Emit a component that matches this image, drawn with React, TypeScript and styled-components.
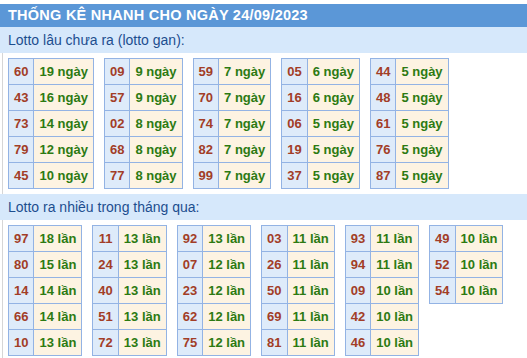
import React from 'react'
import styled, { createGlobalStyle } from 'styled-components'

const Global = createGlobalStyle`
  body {
    margin: 0;
    background: #ffffff;
    font-family: "Liberation Sans", Arial, sans-serif;
  }
`

const Wrap = styled.div`
  padding-top: 4px;
  width: 527px;
`

const Title = styled.div`
  height: 23px;
  line-height: 23px;
  background: #5b97d7;
  color: #ffffff;
  font-size: 14.5px;
  letter-spacing: 0.25px;
  font-weight: bold;
  padding-left: 8px;
`

const SubTitle = styled.div`
  height: 26px;
  line-height: 26px;
  background: #d6e8fb;
  color: #1d4e8f;
  font-size: 14px;
  padding-left: 8px;
`

const Body = styled.div`
  margin-left: 2px;
  border-left: 1px solid #d6d6d6;
  padding: 5px 0 5px 5px;
  display: flex;
  align-items: flex-start;
  gap: 10px;
`

const Table = styled.table`
  border-collapse: collapse;
  font-size: 13px;
  font-weight: bold;
`

const NumCell = styled.td`
  border: 1px solid #93b3e4;
  background: #deebfa;
  color: #a23d27;
  line-height: 25px;
  padding: 0 5px;
  text-align: center;
`

const CountCell = styled.td`
  border: 1px solid #93b3e4;
  background: #fdf3e2;
  color: #2c7a12;
  line-height: 25px;
  padding: 0 5px;
`

type Row = [string, string]

const gan: Row[][] = [
  [['60', '19'], ['43', '16'], ['73', '14'], ['79', '12'], ['45', '10']],
  [['09', '9'], ['57', '9'], ['02', '8'], ['68', '8'], ['77', '8']],
  [['59', '7'], ['70', '7'], ['74', '7'], ['82', '7'], ['99', '7']],
  [['05', '6'], ['16', '6'], ['06', '5'], ['19', '5'], ['37', '5']],
  [['44', '5'], ['48', '5'], ['61', '5'], ['76', '5'], ['87', '5']],
]

const nhieu: Row[][] = [
  [['97', '18'], ['80', '15'], ['14', '14'], ['66', '14'], ['10', '13']],
  [['11', '13'], ['24', '13'], ['40', '13'], ['51', '13'], ['72', '13']],
  [['92', '13'], ['07', '12'], ['23', '12'], ['62', '12'], ['75', '12']],
  [['03', '11'], ['26', '11'], ['50', '11'], ['69', '11'], ['81', '11']],
  [['93', '11'], ['94', '11'], ['09', '10'], ['42', '10'], ['46', '10']],
  [['49', '10'], ['52', '10'], ['54', '10']],
]

function Block({ rows, unit }: { rows: Row[][]; unit: string }) {
  return (
    <Body>
      {rows.map((t, i) => (
        <Table key={i}>
          <tbody>
            {t.map(([n, c]) => (
              <tr key={n}>
                <NumCell>{n}</NumCell>
                <CountCell>{c} {unit}</CountCell>
              </tr>
            ))}
          </tbody>
        </Table>
      ))}
    </Body>
  )
}

export default function App() {
  return (
    <Wrap>
      <Global />
      <Title>THỐNG KÊ NHANH CHO NGÀY 24/09/2023</Title>
      <SubTitle>Lotto lâu chưa ra (lotto gan):</SubTitle>
      <Block rows={gan} unit="ngày" />
      <SubTitle>Lotto ra nhiều trong tháng qua:</SubTitle>
      <Block rows={nhieu} unit="lần" />
    </Wrap>
  )
}
